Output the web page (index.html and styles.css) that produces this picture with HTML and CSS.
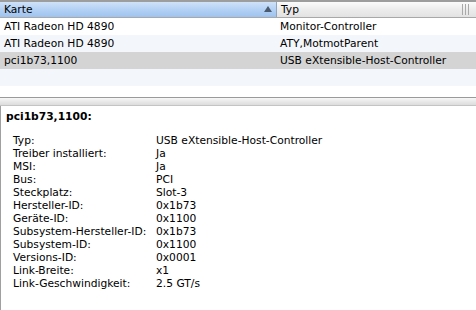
FILE: index.html
```html
<!DOCTYPE html>
<html>
<head>
    <title>Systeminformationen - PCI</title>
    <link rel="stylesheet" href="styles.css">
</head>
<body>
<div class="window">
    <div class="device-list">
        <div class="list-header">
            <div class="col col-card sorted">Karte<span class="sort-arrow"></span></div>
            <div class="col col-type">Typ<span class="resize-grip"></span></div>
        </div>
        <div class="list-row">
            <div class="col col-card">ATI Radeon HD 4890</div>
            <div class="col col-type">Monitor-Controller</div>
        </div>
        <div class="list-row alt">
            <div class="col col-card">ATI Radeon HD 4890</div>
            <div class="col col-type">ATY,MotmotParent</div>
        </div>
        <div class="list-row selected">
            <div class="col col-card">pci1b73,1100</div>
            <div class="col col-type">USB eXtensible-Host-Controller</div>
        </div>
        <div class="list-row alt"></div>
    </div>

    <div class="splitter"></div>

    <div class="details">
        <div class="details-title">pci1b73,1100:</div>
        <div class="props">
            <div class="prop-label">Typ:</div><div class="prop-value">USB eXtensible-Host-Controller</div>
            <div class="prop-label">Treiber installiert:</div><div class="prop-value">Ja</div>
            <div class="prop-label">MSI:</div><div class="prop-value">Ja</div>
            <div class="prop-label">Bus:</div><div class="prop-value">PCI</div>
            <div class="prop-label">Steckplatz:</div><div class="prop-value">Slot-3</div>
            <div class="prop-label">Hersteller-ID:</div><div class="prop-value">0x1b73</div>
            <div class="prop-label">Geräte-ID:</div><div class="prop-value">0x1100</div>
            <div class="prop-label">Subsystem-Hersteller-ID:</div><div class="prop-value">0x1b73</div>
            <div class="prop-label">Subsystem-ID:</div><div class="prop-value">0x1100</div>
            <div class="prop-label">Versions-ID:</div><div class="prop-value">0x0001</div>
            <div class="prop-label">Link-Breite:</div><div class="prop-value">x1</div>
            <div class="prop-label">Link-Geschwindigkeit:</div><div class="prop-value">2.5 GT/s</div>
        </div>
    </div>
</div>
</body>
</html>
```

FILE: styles.css
```css
body {
    margin: 0;
    padding: 0;
    background-color: #ffffff;
    font-family: "DejaVu Sans", sans-serif;
    font-size: 10.7px;
    color: #000000;
}
.window {
    width: 476px;
    height: 310px;
    display: flex;
    flex-direction: column;
    overflow: hidden;
}
.device-list {
    height: 97px;
    background: #ffffff;
}
.list-header {
    display: flex;
    height: 15px;
    border-top: 2px solid #9d9d9d;
    border-bottom: 1px solid #a8a8a8;
    background: linear-gradient(#fbfbfb, #ececec 50%, #e2e2e2);
}
.list-header .col {
    line-height: 15px;
    position: relative;
}
.list-header .sorted {
    background: linear-gradient(#cfe2f8, #b3d1f4 50%, #9ec3ef);
    border-right: 1px solid #8fa6c2;
}
.sort-arrow {
    position: absolute;
    right: 4px;
    top: 4px;
    width: 0;
    height: 0;
    border-left: 4px solid transparent;
    border-right: 4px solid transparent;
    border-bottom: 6px solid #4b5a6e;
}
.resize-grip {
    position: absolute;
    right: 7px;
    top: 2px;
    width: 5px;
    height: 11px;
    border-left: 1px solid #a9a9a9;
    border-right: 1px solid #a9a9a9;
}
.resize-grip::after {
    content: "";
    position: absolute;
    left: 2px;
    top: 0;
    width: 1px;
    height: 11px;
    background: #a9a9a9;
}
.list-row {
    display: flex;
    height: 17px;
    line-height: 17px;
}
.list-row.alt {
    background: #f3f6fa;
}
.list-row.selected {
    background: #d4d4d4;
}
.col {
    white-space: nowrap;
    overflow: hidden;
}
.col-card {
    width: 272px;
    padding-left: 4px;
}
.col-type {
    flex: 1;
    padding-left: 4px;
}
.splitter {
    height: 7px;
    border-top: 1px solid #9a9a9a;
    border-bottom: 1px solid #c4c4c4;
    background: linear-gradient(#f7f7f7, #e6e6e6 60%, #dddddd);
}
.details {
    flex: 1;
    border-left: 1px solid #a0a0a0;
    padding: 3px 0 0 5px;
}
.details-title {
    font-weight: bold;
    line-height: 16px;
}
.props {
    display: grid;
    grid-template-columns: 143px auto;
    grid-auto-rows: 13px;
    line-height: 13px;
    padding: 9px 0 0 7px;
}
```
